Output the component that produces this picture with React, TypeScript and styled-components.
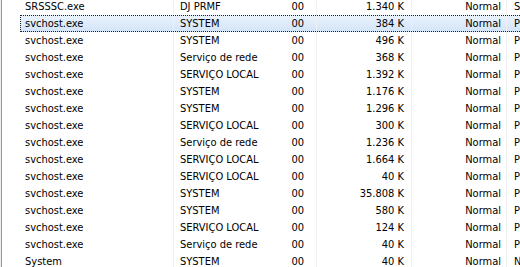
import React from "react";
import styled, { createGlobalStyle } from "styled-components";

const Global = createGlobalStyle`
  html, body { margin: 0; padding: 0; background: #ffffff; overflow: hidden; }
  body { width: 520px; height: 267px; }
`;

const Frame = styled.div`
  width: 520px;
  height: 267px;
  overflow: hidden;
  background: #ffffff;
  border-left: 1px solid #ececec;
  box-sizing: border-box;
  display: flex;
`;

const Edge = styled.div`
  width: 1px;
  flex: none;
  background: #9a9a9a;
`;

const Viewport = styled.div`
  flex: 1;
  overflow: hidden;
  padding-left: 18px;
`;

const List = styled.div`
  margin-top: -2px;
  display: flex;
  flex-direction: column;
  width: 560px;
`;

const Row = styled.div<{ $selected?: boolean }>`
  display: grid;
  grid-template-columns: 154px 106px 37px 95px 95px 73px;
  height: 17px;
  box-sizing: border-box;
  font-family: "DejaVu Sans Condensed", "DejaVu Sans", sans-serif;
  font-stretch: condensed;
  font-size: 11px;
  color: #000000;
  ${(p) =>
    p.$selected
      ? `
    background: linear-gradient(#eaf3fd, #d3e4f8);
    outline: 1px dotted #202020;
    outline-offset: -1px;
  `
      : ""}
`;

const Cell = styled.div<{ $align?: "left" | "right"; $pad?: number; $line?: boolean }>`
  display: flex;
  align-items: center;
  justify-content: ${(p) => (p.$align === "right" ? "flex-end" : "flex-start")};
  padding: ${(p) => (p.$align === "right" ? `0 ${p.$pad ?? 6}px 0 0` : `0 0 0 ${p.$pad ?? 5}px`)};
  white-space: nowrap;
  overflow: hidden;
  box-sizing: border-box;
  border-right: ${(p) => (p.$line ? "1px solid #f0f0f0" : "none")};
`;

type Proc = [string, string, string, string, string];

const rows: Proc[] = [
  ["SRSSSC.exe", "DJ PRMF", "00", "1.340 K", "SRSSSC"],
  ["svchost.exe", "SYSTEM", "00", "384 K", "Processo host"],
  ["svchost.exe", "SYSTEM", "00", "496 K", "Processo host"],
  ["svchost.exe", "Serviço de rede", "00", "368 K", "Processo host"],
  ["svchost.exe", "SERVIÇO LOCAL", "00", "1.392 K", "Processo host"],
  ["svchost.exe", "SYSTEM", "00", "1.176 K", "Processo host"],
  ["svchost.exe", "SYSTEM", "00", "1.296 K", "Processo host"],
  ["svchost.exe", "SERVIÇO LOCAL", "00", "300 K", "Processo host"],
  ["svchost.exe", "Serviço de rede", "00", "1.236 K", "Processo host"],
  ["svchost.exe", "SERVIÇO LOCAL", "00", "1.664 K", "Processo host"],
  ["svchost.exe", "SERVIÇO LOCAL", "00", "40 K", "Processo host"],
  ["svchost.exe", "SYSTEM", "00", "35.808 K", "Processo host"],
  ["svchost.exe", "SYSTEM", "00", "580 K", "Processo host"],
  ["svchost.exe", "SERVIÇO LOCAL", "00", "124 K", "Processo host"],
  ["svchost.exe", "Serviço de rede", "00", "40 K", "Processo host"],
  ["System", "SYSTEM", "00", "40 K", "NT Kernel & System"],
];

export default function App() {
  return (
    <>
      <Global />
      <Frame>
        <Edge />
        <Viewport>
          <List>
            {rows.map((r, i) => (
              <Row key={i} $selected={i === 1}>
                <Cell $pad={5} $line>{r[0]}</Cell>
                <Cell $pad={6}>{r[1]}</Cell>
                <Cell $align="right" $pad={12} $line>{r[2]}</Cell>
                <Cell $align="right" $pad={7} $line>{r[3]}</Cell>
                <Cell $align="right" $pad={5} $line>Normal</Cell>
                <Cell $pad={7}>{r[4]}</Cell>
              </Row>
            ))}
          </List>
        </Viewport>
      </Frame>
    </>
  );
}
